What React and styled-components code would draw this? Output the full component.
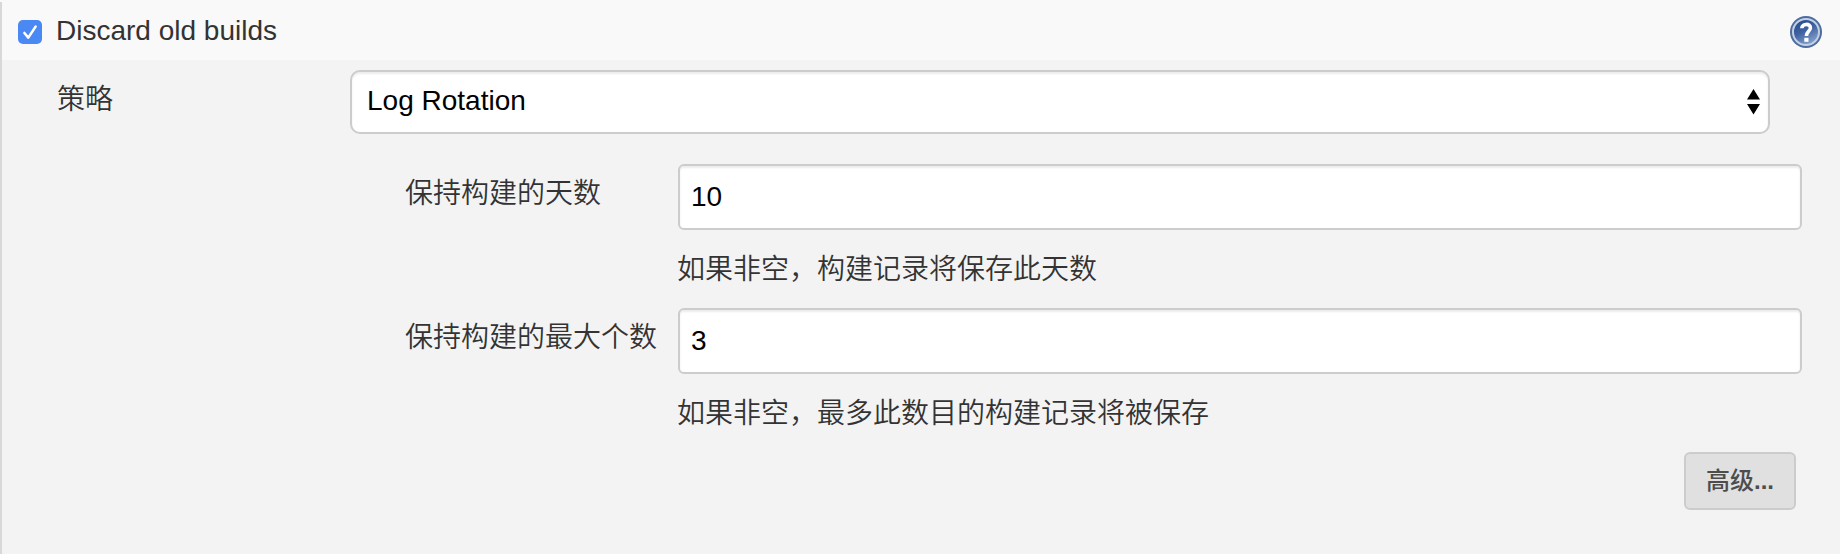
import React, { useState } from "react";
import styled, { createGlobalStyle } from "styled-components";

const GlobalStyle = createGlobalStyle`
  *, *::before, *::after { box-sizing: border-box; }
  body { margin: 0; background: #f3f3f3; }
`;

const sans = `"Liberation Sans", "Noto Sans CJK SC", sans-serif`;

const Page = styled.div`
  height: 554px;
  overflow: hidden;
  padding-top: 2px;
  background: linear-gradient(#f9f9f9 2px, #f3f3f3 2px);
  font: 28px/34px ${sans};
  color: #333;
`;

const Section = styled.div`
  height: 552px;
  border-left: 2px solid #d8d8d8;
`;

const Header = styled.label`
  display: flex;
  align-items: center;
  height: 58px;
  padding: 2px 18px 0 16px;
  background: #f9f9f9;
`;

const HiddenCheckbox = styled.input`
  appearance: none;
  width: 0;
  height: 0;
  margin: 0;
`;

const CheckBox = styled.span`
  display: flex;
  width: 24px;
  height: 24px;
  border-radius: 5px;
  background: ${(p) => (p.$checked ? "#4a88f3" : "#fff")};
`;

const HeaderText = styled.span`
  flex: 1;
  margin: -3px 0 0 14px;
`;

const HelpIcon = styled.svg`
  display: block;
  width: 32px;
  height: 32px;
`;

const Body = styled.div`
  padding: 10px 38px 0 55px;
`;

const StrategyRow = styled.div`
  display: flex;
  height: 64px;
  padding-right: 32px;
`;

const StrategyLabel = styled.span`
  width: 293px;
  padding-top: 13px;
  font-weight: 350;
`;

const Select = styled.div`
  flex: 1;
  display: flex;
  align-items: center;
  justify-content: space-between;
  padding: 0 7px 2px 15px;
  border: 2px solid #ccc;
  border-radius: 10px;
  background: #fff;
  box-shadow: inset 0 2px 2px rgba(0, 0, 0, 0.075);
  color: #000;
`;

const Arrows = styled.svg`
  width: 14px;
  height: 28px;
  margin-top: 2px;
`;

const Fields = styled.div`
  padding: 30px 0 0 348px;
`;

const Field = styled.div`
  display: grid;
  grid-template-columns: 273px 1fr;
  grid-template-rows: 66px 78px;
`;

const FieldLabel = styled.label`
  padding-top: 13px;
  font-weight: 350;
  white-space: nowrap;
`;

const TextInput = styled.input`
  width: 100%;
  height: 66px;
  padding: 0 11px;
  border: 2px solid #ccc;
  border-radius: 6px;
  outline: 0;
  background: #fff;
  box-shadow: inset 0 2px 2px rgba(0, 0, 0, 0.075);
  font: 28px ${sans};
  color: #000;
`;

const Description = styled.span`
  grid-column: 2;
  margin-left: -1px;
  padding-top: 23px;
  font-weight: 350;
`;

const Actions = styled.div`
  display: flex;
  justify-content: flex-end;
  padding-right: 6px;
`;

const Button = styled.button`
  width: 112px;
  height: 58px;
  padding: 0 0 6px;
  border: 2px solid #ccc;
  border-radius: 6px;
  background: #e0e0e0;
  font: 500 24px ${sans};
  color: #4d4d4d;
`;

const Ellipsis = styled.span`
  font-weight: 700;
`;

const fields = [
  { id: "days", label: "保持构建的天数", value: "10", note: "如果非空，构建记录将保存此天数" },
  { id: "count", label: "保持构建的最大个数", value: "3", note: "如果非空，最多此数目的构建记录将被保存" },
];

function Help() {
  return (
    <HelpIcon viewBox="0 0 32 32">
      <defs>
        <linearGradient id="disc" x1="0.1" y1="0" x2="0.6" y2="1">
          <stop offset="0" stopColor="#234789" />
          <stop offset="0.5" stopColor="#3f62a0" />
          <stop offset="1" stopColor="#86a3cd" />
        </linearGradient>
      </defs>
      <circle cx="16" cy="16" r="16" fill="#4d6ca0" />
      <circle cx="16" cy="16" r="13" fill="url(#disc)" stroke="#c3d0e4" strokeWidth="2" />
      <path d="M11.8 12.2C12 7.2 20.6 7.2 20.4 12C20.3 15.2 16.4 15.4 16.4 20" fill="none" stroke="#fff" strokeWidth="3.6" />
      <rect x="14.3" y="21.8" width="4.2" height="4" fill="#fff" />
    </HelpIcon>
  );
}

export default function App() {
  const [checked, setChecked] = useState(true);
  return (
    <>
      <GlobalStyle />
      <Page>
        <Section>
          <Header>
            <HiddenCheckbox type="checkbox" checked={checked} onChange={() => setChecked(!checked)} />
            <CheckBox $checked={checked}>
              <svg width="24" height="24" viewBox="0 0 24 24">
                <path d="M6.4 13L10.3 17.6L17.6 6.6" fill="none" stroke="#fff" strokeWidth="2.6" strokeLinecap="round" strokeLinejoin="round" />
              </svg>
            </CheckBox>
            <HeaderText>Discard old builds</HeaderText>
            <Help />
          </Header>
          <Body>
            <StrategyRow>
              <StrategyLabel>策略</StrategyLabel>
              <Select>
                Log Rotation
                <Arrows viewBox="0 0 14 28">
                  <path d="M0 11.5L6.5 1L13 11.5ZM0 16H13L6.5 26.5Z" fill="#000" />
                </Arrows>
              </Select>
            </StrategyRow>
            <Fields>
              {fields.map((f) => (
                <Field key={f.id}>
                  <FieldLabel htmlFor={f.id}>{f.label}</FieldLabel>
                  <TextInput id={f.id} defaultValue={f.value} />
                  <Description>{f.note}</Description>
                </Field>
              ))}
            </Fields>
            <Actions>
              <Button type="button">高级<Ellipsis>...</Ellipsis></Button>
            </Actions>
          </Body>
        </Section>
      </Page>
    </>
  );
}
